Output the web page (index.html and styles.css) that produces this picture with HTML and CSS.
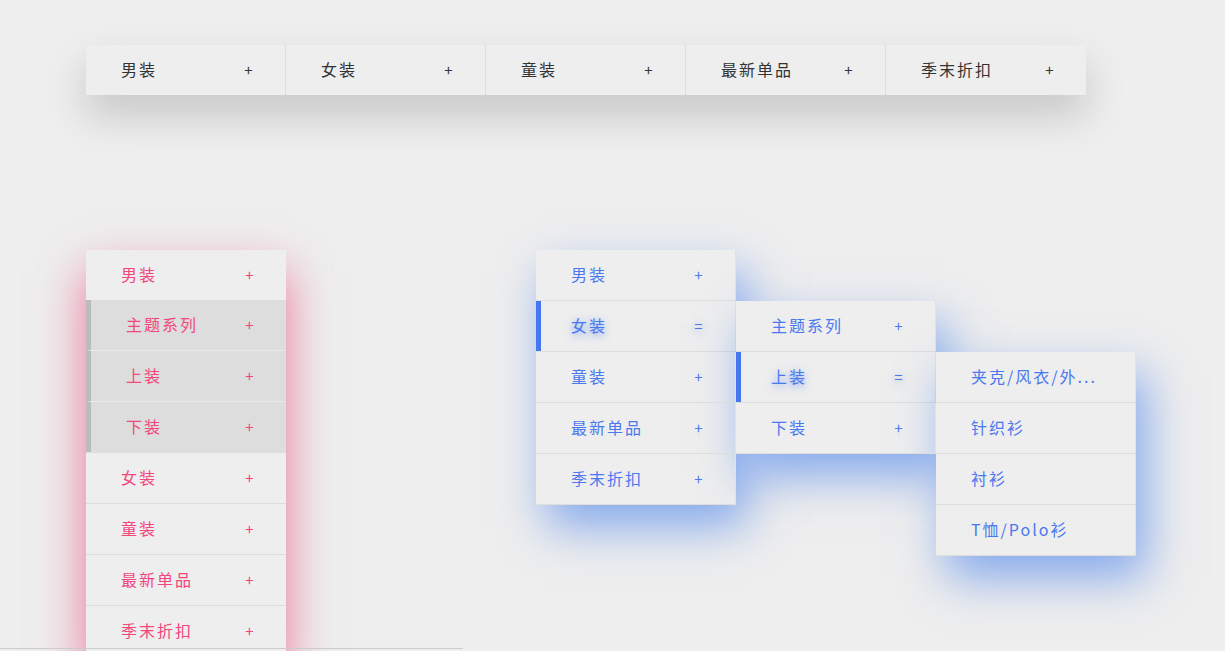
FILE: index.html
```html
<!DOCTYPE html>
<html lang="zh">
<head>
<meta charset="utf-8">
<title>Menu</title>
<link rel="stylesheet" href="styles.css">
</head>
<body>
<div class="page">
  <nav class="topbar">
    <div class="top-item"><span class="label">男装</span><span class="sign">+</span></div>
    <div class="top-item"><span class="label">女装</span><span class="sign">+</span></div>
    <div class="top-item"><span class="label">童装</span><span class="sign">+</span></div>
    <div class="top-item"><span class="label">最新单品</span><span class="sign">+</span></div>
    <div class="top-item"><span class="label">季末折扣</span><span class="sign">+</span></div>
  </nav>

  <div class="menus">
    <ul class="menu pink">
      <li class="item">
        <div class="row"><span class="label">男装</span><span class="sign">+</span></div>
        <ul class="sub">
          <li class="row subrow"><span class="label">主题系列</span><span class="sign">+</span></li>
          <li class="row subrow"><span class="label">上装</span><span class="sign">+</span></li>
          <li class="row subrow"><span class="label">下装</span><span class="sign">+</span></li>
        </ul>
      </li>
      <li class="item"><div class="row"><span class="label">女装</span><span class="sign">+</span></div></li>
      <li class="item"><div class="row"><span class="label">童装</span><span class="sign">+</span></div></li>
      <li class="item"><div class="row"><span class="label">最新单品</span><span class="sign">+</span></div></li>
      <li class="item"><div class="row"><span class="label">季末折扣</span><span class="sign">+</span></div></li>
    </ul>

    <ul class="menu blue">
      <li class="item"><div class="row"><span class="label">男装</span><span class="sign">+</span></div></li>
      <li class="item active">
        <div class="row"><span class="label">女装</span><span class="sign">=</span></div>
        <ul class="menu blue flyout">
          <li class="item"><div class="row"><span class="label">主题系列</span><span class="sign">+</span></div></li>
          <li class="item active">
            <div class="row"><span class="label">上装</span><span class="sign">=</span></div>
            <ul class="menu blue flyout">
              <li class="item"><div class="row"><span class="label">夹克/风衣/外...</span></div></li>
              <li class="item"><div class="row"><span class="label">针织衫</span></div></li>
              <li class="item"><div class="row"><span class="label">衬衫</span></div></li>
              <li class="item"><div class="row"><span class="label">T恤/Polo衫</span></div></li>
            </ul>
          </li>
          <li class="item"><div class="row"><span class="label">下装</span><span class="sign">+</span></div></li>
        </ul>
      </li>
      <li class="item"><div class="row"><span class="label">童装</span><span class="sign">+</span></div></li>
      <li class="item"><div class="row"><span class="label">最新单品</span><span class="sign">+</span></div></li>
      <li class="item"><div class="row"><span class="label">季末折扣</span><span class="sign">+</span></div></li>
    </ul>
  </div>
</div>
<div class="bottom-line"></div>
</body>
</html>
```

FILE: styles.css
```css
* { box-sizing: border-box; }
html, body {
  margin: 0;
  padding: 0;
  background: #eeeeee;
  overflow: hidden;
  height: 651px;
}
body {
  font-family: "Noto Sans CJK SC", "Noto Sans", sans-serif;
  font-size: 16px;
  letter-spacing: 2px;
}
ul { list-style: none; margin: 0; padding: 0; }

.page {
  padding: 45px 0 0 86px;
}

.topbar {
  display: flex;
  width: 1000px;
  box-shadow: 0 20px 40px rgba(0, 0, 0, 0.17);
}
.top-item {
  width: 200px;
  height: 50px;
  display: flex;
  align-items: center;
  justify-content: space-between;
  padding: 0 32px 2px 35px;
  background: #eeeeee;
  border-right: 1px solid #dddddd;
  color: #333333;
}
.top-item:last-child { border-right: none; }

.sign {
  font-size: 15px;
  letter-spacing: 0;
  width: 9px;
  text-align: center;
}

.menus {
  display: flex;
  align-items: flex-start;
  gap: 250px;
  margin-top: 155px;
}

.menu {
  width: 200px;
  background: #eeeeee;
}

.row {
  height: 50px;
  display: flex;
  align-items: center;
  justify-content: space-between;
  padding: 0 32px 2px 35px;
}
.item { border-bottom: 1px solid #dddddd; }
.label {
  white-space: nowrap;
}

/* pink menu */
.pink {
  color: #f2467c;
  box-shadow: 0 22px 44px rgba(236, 64, 114, 0.7);
}
.pink .sub { background: #dddddd; }
.pink .subrow {
  height: 51px;
  border-left: 5px solid #bbbbbb;
  border-bottom: 1px solid #e8e8e8;
}
.pink .subrow:last-child { border-bottom: none; height: 50px; }

/* blue menu */
.blue {
  color: #4b78ee;
  box-shadow: 10px 22px 44px rgba(70, 128, 235, 0.62);
}
.blue .row { border-right: 1px solid #e2e2e2; }
.blue .item { position: relative; }
.blue .active > .row {
  box-shadow: inset 5px 0 0 #4677f0;
}
.blue .active > .row .label,
.blue .active > .row .sign {
  text-shadow: 0 2px 8px rgba(70, 120, 240, 0.75);
}
.flyout {
  position: absolute;
  left: 100%;
  top: 0;
}

.bottom-line {
  position: fixed;
  left: 0;
  bottom: 2px;
  width: 463px;
  height: 1px;
  background: #cccccc;
}
```
